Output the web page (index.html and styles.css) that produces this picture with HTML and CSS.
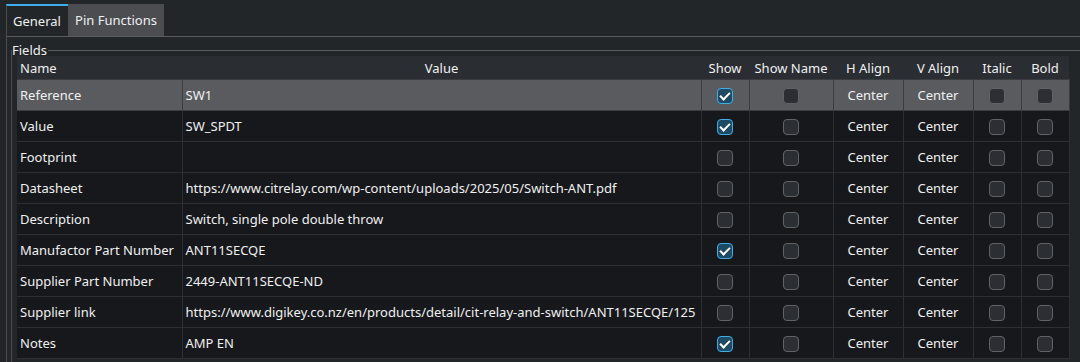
FILE: index.html
```html
<!DOCTYPE html>
<html lang="en">
<head>
  <meta charset="UTF-8">
  <title>Symbol Properties</title>
  <link rel="stylesheet" href="styles.css">
</head>
<body>

<div class="tabs">
  <div class="tab activo">General</div>
  <div class="tab pines">Pin Functions</div>
</div>

<div class="panel">
  <div class="grupo">
    <div class="grupo-titulo"><span>Fields</span></div>
    <div class="grupo-cuerpo">
      <table class="campos">
        <colgroup>
          <col style="width:165px">
          <col style="width:519px">
          <col style="width:48px">
          <col style="width:84px">
          <col style="width:70px">
          <col style="width:70px">
          <col style="width:48px">
          <col style="width:48px">
        </colgroup>
        <thead>
          <tr>
            <th class="izq">Name</th>
            <th>Value</th>
            <th>Show</th>
            <th>Show Name</th>
            <th>H Align</th>
            <th>V Align</th>
            <th>Italic</th>
            <th>Bold</th>
          </tr>
        </thead>
        <tbody>
          <tr class="sel">
            <td>Reference</td><td>SW1</td>
            <td class="c"><span class="chk on"></span></td><td class="c"><span class="chk"></span></td>
            <td class="c">Center</td><td class="c">Center</td>
            <td class="c"><span class="chk"></span></td><td class="c"><span class="chk"></span></td>
          </tr>
          <tr>
            <td>Value</td><td>SW_SPDT</td>
            <td class="c"><span class="chk on"></span></td><td class="c"><span class="chk"></span></td>
            <td class="c">Center</td><td class="c">Center</td>
            <td class="c"><span class="chk"></span></td><td class="c"><span class="chk"></span></td>
          </tr>
          <tr>
            <td>Footprint</td><td></td>
            <td class="c"><span class="chk"></span></td><td class="c"><span class="chk"></span></td>
            <td class="c">Center</td><td class="c">Center</td>
            <td class="c"><span class="chk"></span></td><td class="c"><span class="chk"></span></td>
          </tr>
          <tr>
            <td>Datasheet</td><td>https://www.citrelay.com/wp-content/uploads/2025/05/Switch-ANT.pdf</td>
            <td class="c"><span class="chk"></span></td><td class="c"><span class="chk"></span></td>
            <td class="c">Center</td><td class="c">Center</td>
            <td class="c"><span class="chk"></span></td><td class="c"><span class="chk"></span></td>
          </tr>
          <tr>
            <td>Description</td><td>Switch, single pole double throw</td>
            <td class="c"><span class="chk"></span></td><td class="c"><span class="chk"></span></td>
            <td class="c">Center</td><td class="c">Center</td>
            <td class="c"><span class="chk"></span></td><td class="c"><span class="chk"></span></td>
          </tr>
          <tr>
            <td>Manufactor Part Number</td><td>ANT11SECQE</td>
            <td class="c"><span class="chk on"></span></td><td class="c"><span class="chk"></span></td>
            <td class="c">Center</td><td class="c">Center</td>
            <td class="c"><span class="chk"></span></td><td class="c"><span class="chk"></span></td>
          </tr>
          <tr>
            <td>Supplier Part Number</td><td>2449-ANT11SECQE-ND</td>
            <td class="c"><span class="chk"></span></td><td class="c"><span class="chk"></span></td>
            <td class="c">Center</td><td class="c">Center</td>
            <td class="c"><span class="chk"></span></td><td class="c"><span class="chk"></span></td>
          </tr>
          <tr>
            <td>Supplier link</td><td>https://www.digikey.co.nz/en/products/detail/cit-relay-and-switch/ANT11SECQE/125</td>
            <td class="c"><span class="chk"></span></td><td class="c"><span class="chk"></span></td>
            <td class="c">Center</td><td class="c">Center</td>
            <td class="c"><span class="chk"></span></td><td class="c"><span class="chk"></span></td>
          </tr>
          <tr>
            <td>Notes</td><td>AMP EN</td>
            <td class="c"><span class="chk on"></span></td><td class="c"><span class="chk"></span></td>
            <td class="c">Center</td><td class="c">Center</td>
            <td class="c"><span class="chk"></span></td><td class="c"><span class="chk"></span></td>
          </tr>
        </tbody>
      </table>
    </div>
  </div>
</div>

</body>
</html>
```

FILE: styles.css
```css
body {
  font-family: 'Noto Sans', sans-serif;
  font-size: 13px;
  color: #eff0f1;
  background-color: #232629;
  margin: 0;
  height: 362px;
  overflow: hidden;
}

.tabs {
  display: flex;
  padding: 4px 0 0 6px;
  height: 32px;
}

.tab {
  height: 32px;
  line-height: 32px;
  padding: 0 6px;
  background-color: #4b4d51;
  box-sizing: border-box;
}

.tab.activo {
  width: 62px;
  background-color: #232629;
  border-top: 2px solid #3daee9;
  border-left: 1px solid #4b4d51;
  line-height: 30px;
}

.tab.pines {
  width: 96px;
  text-align: center;
}

.panel {
  border-top: 1px solid #5a5c60;
  border-left: 1px solid #4b4d51;
  margin-left: 6px;
  padding: 4px 0 0 4px;
  height: 326px;
  box-sizing: border-box;
  overflow: hidden;
}

.grupo-titulo {
  display: flex;
  align-items: center;
  height: 20px;
  margin-top: -1px;
}

.grupo-titulo span {
  padding: 0 1px;
}

.grupo-titulo::after {
  content: '';
  flex: 1;
  border-top: 1px solid #5a5c60;
}

.grupo-cuerpo {
  border-left: 1px solid #4b4d51;
  margin-top: -10px;
  padding: 6px 0 0 5px;
  height: 400px;
}

.campos {
  border-collapse: collapse;
  table-layout: fixed;
  width: 1052px;
}

.campos th {
  background-color: #2a2d31;
  font-weight: normal;
  height: 23px;
  padding: 0;
  text-align: center;
  white-space: nowrap;
}

.campos th.izq {
  text-align: left;
  padding-left: 3px;
}

.campos td {
  background-color: #17181b;
  height: 30px;
  padding: 0 2px 0 3px;
  border: 1px solid #2d2f33;
  white-space: nowrap;
  overflow: hidden;
}

.campos tr td:first-child {
  border-left: none;
}

.campos td.c {
  text-align: center;
  padding: 0;
}

.campos tr.sel td {
  background-color: #5a5b5f;
  border-color: #3a3c40;
}

.chk {
  display: inline-block;
  width: 14px;
  height: 14px;
  border: 1px solid #5f6267;
  border-radius: 4px;
  background-color: #2b2e33;
  vertical-align: middle;
  position: relative;
}

.chk.on {
  border-color: #3daee9;
  background-color: #1e4a62;
}

.chk.on::after {
  content: '';
  position: absolute;
  left: 4px;
  top: 1px;
  width: 4px;
  height: 8px;
  border-right: 2px solid #ffffff;
  border-bottom: 2px solid #ffffff;
  transform: rotate(45deg);
}
```
